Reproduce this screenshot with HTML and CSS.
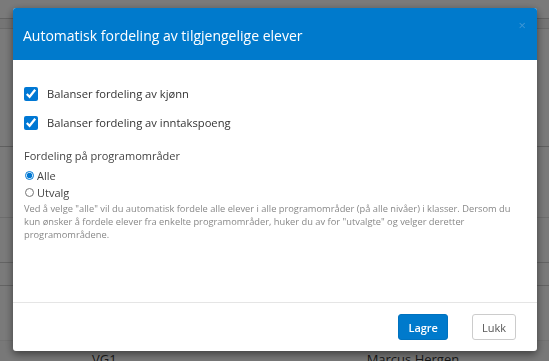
FILE: index.html
```html
<!DOCTYPE html>
<html>
<head>
    <title>Automatisk fordeling</title>
    <link rel="stylesheet" href="styles.css">
</head>
<body>
    <!-- Siden bak dialogen -->
    <div class="page">
        <div class="row row-top"></div>
        <div class="row row-head"></div>
        <div class="row row-a"></div>
        <div class="row row-b"></div>
        <div class="row row-c"></div>
        <div class="row row-d"></div>
        <div class="row row-e"></div>
        <div class="row row-last">
            <span class="cell cell-1">VG1</span>
            <span class="cell cell-2">Marcus Hergen</span>
        </div>
    </div>

    <div class="backdrop">
        <div class="modal">
            <div class="modal-header">
                <h2>Automatisk fordeling av tilgjengelige elever</h2>
                <span class="close">&times;</span>
            </div>

            <div class="modal-body">
                <label class="check">
                    <input type="checkbox" checked>
                    <span>Balanser fordeling av kjønn</span>
                </label>
                <label class="check">
                    <input type="checkbox" checked>
                    <span>Balanser fordeling av inntakspoeng</span>
                </label>

                <div class="group-title">Fordeling på programområder</div>
                <label class="radio">
                    <input type="radio" name="omrade" checked>
                    <span>Alle</span>
                </label>
                <label class="radio">
                    <input type="radio" name="omrade">
                    <span>Utvalg</span>
                </label>
                <p class="help">Ved å velge "alle" vil du automatisk fordele alle elever i alle programområder (på alle nivåer) i klasser. Dersom du kun ønsker å fordele elever fra enkelte programområder, huker du av for "utvalgte" og velger deretter programområdene.</p>
            </div>

            <div class="modal-footer">
                <button class="btn btn-primary">Lagre</button>
                <button class="btn btn-default">Lukk</button>
            </div>
        </div>
    </div>
</body>
</html>
```

FILE: styles.css
```css
body { margin: 0; background: #fff; font-family: "Open Sans", "Liberation Sans", sans-serif; }

.page { height: 361px; overflow: hidden; }
.row { border-bottom: 1px solid #ddd; box-sizing: border-box; }
.row-top { height: 19px; border-bottom-color: #ccc; }
.row-head { height: 10px; background: #f4f4f4; }
.row-a { height: 118px; border-bottom-color: #c8c8c8; }
.row-b { height: 71px; border-bottom-color: #e4e4e4; }
.row-c { height: 45px; border-bottom-color: #d0d0d0; }
.row-d { height: 23px; border-bottom-color: #cfcfcf; }
.row-e { height: 54px; border-bottom: none; }
.row-last { height: 40px; background: #fafafa; border-top: 1px solid #eee; display: flex; padding-top: 9px; font-size: 13px; color: #333; }
.cell-1 { margin-left: 92px; }
.cell-2 { margin-left: 250px; }

.backdrop { position: fixed; inset: 0; background: rgba(0, 0, 0, 0.52); }

.modal {
    margin: 8px 0 0 13px;
    width: 524px;
    background: #fff;
    border-radius: 3px;
    box-shadow: 0 3px 9px rgba(0, 0, 0, 0.5);
    overflow: hidden;
}

.modal-header {
    background: #007acc;
    height: 52px;
    padding: 0 10px;
    display: flex;
    align-items: center;
    justify-content: space-between;
}
.modal-header h2 { margin: 2px 0 0; font-size: 14px; font-weight: 400; color: #fff; }
.close { font-size: 13px; color: #3f97d6; align-self: flex-start; margin: 11px 1px 0 0; line-height: 1; }

.modal-body { padding: 26px 20px 61px 11px; color: #333; }

.check { display: flex; align-items: center; font-size: 11.2px; height: 15px; margin-bottom: 14px; }
.check input { margin: 0 9px 0 0; width: 14px; height: 14px; accent-color: #0078d4; }

.group-title { font-size: 11px; margin: 18px 0 5px; color: #444; }

.radio { display: flex; align-items: center; font-size: 11px; height: 14px; margin-bottom: 3px; color: #444; }
.radio input { margin: 0 3px 0 1px; width: 9px; height: 9px; accent-color: #0078d4; }

.help { margin: 3px 0 0; font-size: 9.3px; line-height: 13px; color: #888; }

.modal-footer {
    border-top: 1px solid #e5e5e5;
    padding: 11px 21px 11px 0;
    display: flex;
    justify-content: flex-end;
    gap: 24px;
}
.btn { font-family: "Open Sans", "Liberation Sans", sans-serif; font-size: 11px; height: 26px; border-radius: 3px; padding: 0 9px; cursor: pointer; }
.btn-primary { background: #007acc; color: #fff; border: 1px solid #0072bf; font-weight: 600; min-width: 48px; }
.btn-default { background: #fff; color: #555; border: 1px solid #ccc; min-width: 43px; }
```
